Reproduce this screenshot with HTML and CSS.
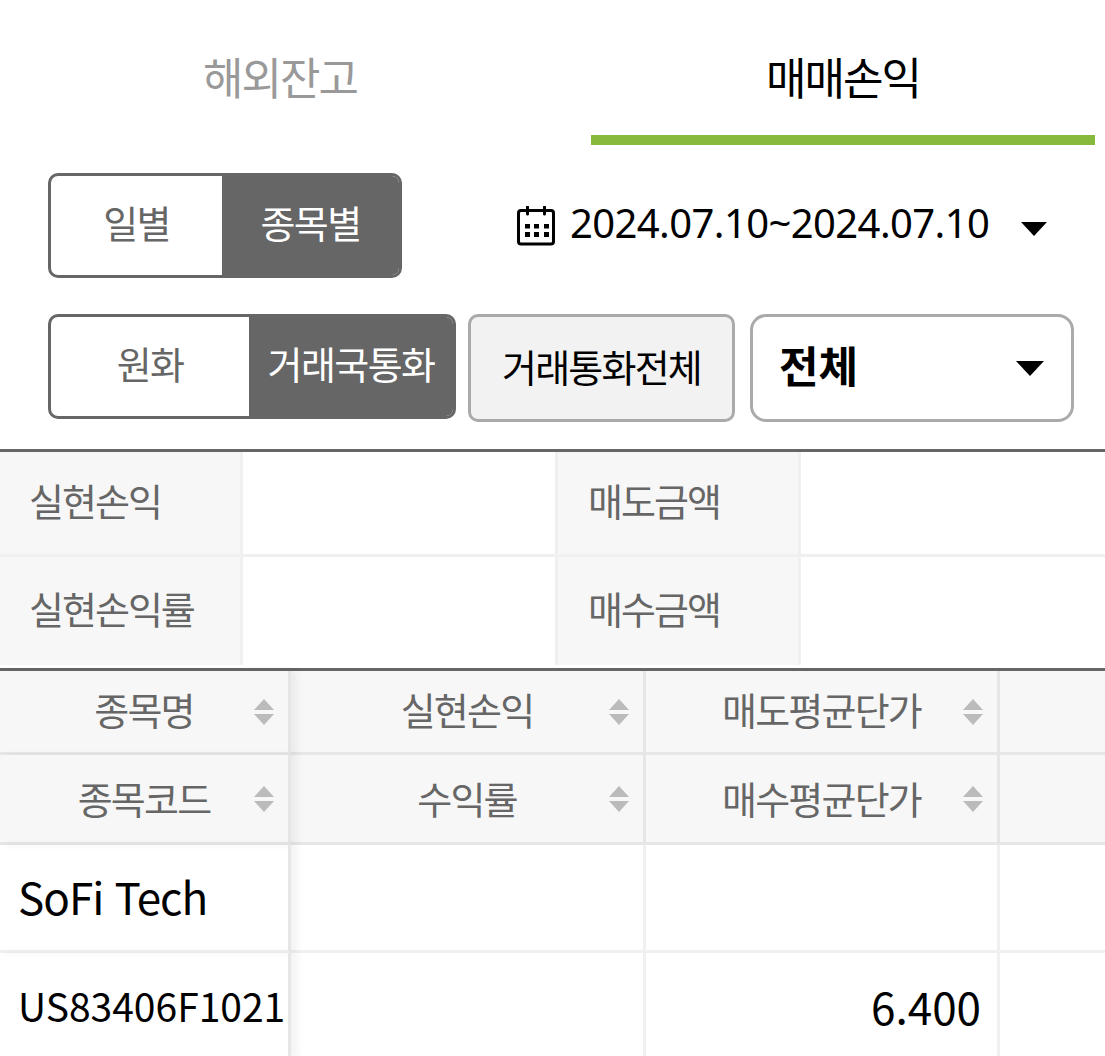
FILE: index.html
```html
<!DOCTYPE html>
<html lang="ko">
<head>
    <meta charset="UTF-8">
    <meta name="viewport" content="width=device-width, initial-scale=1.0">
    <title>매매손익</title>
    <link rel="stylesheet" href="styles.css">
</head>
<body>
    <div class="tabs">
        <div class="tab">해외잔고</div>
        <div class="tab active">매매손익</div>
    </div>

    <div class="filter-row first">
        <div class="toggle toggle-day">
            <div class="toggle-item">일별</div>
            <div class="toggle-item on">종목별</div>
        </div>
        <div class="date-picker">
            <svg class="cal-icon" width="38" height="40" viewBox="0 0 38 40">
                <rect x="1.5" y="4.5" width="35" height="33.5" rx="2.5" fill="none" stroke="#000" stroke-width="3"/>
                <path d="M10.500 1v7M27.500 1v7" stroke="#000" stroke-width="3" stroke-linecap="round"/>
                <path d="M8 18h5v4.500H8zM17 18h5v4.500h-5zM27 18h5v4.500h-5zM8 26h5v5H8zM17 26h5v5h-5zM27 26h5v5h-5z" fill="#000"/>
            </svg>
            <span class="date-text">2024.07.10~2024.07.10</span>
            <span class="caret"></span>
        </div>
    </div>

    <div class="filter-row second">
        <div class="toggle toggle-cur">
            <div class="toggle-item">원화</div>
            <div class="toggle-item on">거래국통화</div>
        </div>
        <div class="cur-btn">거래통화전체</div>
        <div class="cur-select">
            <span class="cur-value">전체</span>
            <span class="caret"></span>
        </div>
    </div>

    <div class="summary">
        <div class="sum-label">실현손익</div>
        <div class="sum-value"></div>
        <div class="sum-label mid">매도금액</div>
        <div class="sum-value"></div>
        <div class="sum-label low">실현손익률</div>
        <div class="sum-value low"></div>
        <div class="sum-label mid low">매수금액</div>
        <div class="sum-value low"></div>
    </div>

    <div class="grid">
        <div class="cell head fixed">종목명<span class="sort"></span></div>
        <div class="cell head">실현손익<span class="sort"></span></div>
        <div class="cell head">매도평균단가<span class="sort"></span></div>
        <div class="cell head last"></div>

        <div class="cell head second-head fixed">종목코드<span class="sort"></span></div>
        <div class="cell head second-head">수익률<span class="sort"></span></div>
        <div class="cell head second-head">매수평균단가<span class="sort"></span></div>
        <div class="cell head second-head last"></div>

        <div class="cell body name fixed">SoFi Tech</div>
        <div class="cell body"></div>
        <div class="cell body"></div>
        <div class="cell body last"></div>

        <div class="cell body code fixed">US83406F1021</div>
        <div class="cell body"></div>
        <div class="cell body num">6.400</div>
        <div class="cell body last"></div>
    </div>
</body>
</html>
```

FILE: styles.css
```css
* {
    box-sizing: border-box;
}
html, body {
    height: 100%;
}
body {
    margin: 0;
    overflow: hidden;
    background-color: #fff;
    font-family: "Noto Sans CJK KR", "Noto Sans", sans-serif;
    color: #000;
}

/* tabs */
.tabs {
    display: flex;
    height: 145px;
    padding-right: 10px;
}
.tab {
    width: 560px;
    padding-top: 46px;
    font-size: 44px;
    line-height: 60px;
    letter-spacing: -2px;
    text-align: center;
    color: #999;
}
.tab.active {
    flex: 1;
    margin-left: 31px;
    color: #000;
    border-bottom: 10px solid #86b93c;
}

/* filter rows */
.filter-row {
    display: flex;
    padding-left: 48px;
}
.filter-row.first {
    height: 169px;
    padding-top: 28px;
}
.filter-row.second {
    height: 135px;
}
.toggle {
    display: flex;
    height: 105px;
    border: 3px solid #666;
    border-radius: 10px;
    overflow: hidden;
    font-size: 38px;
    letter-spacing: -1.6px;
}
.toggle-day {
    width: 354px;
}
.toggle-cur {
    width: 408px;
}
.toggle-item {
    flex: 1;
    display: flex;
    align-items: center;
    justify-content: center;
    padding-bottom: 8px;
    color: #666;
}
.toggle-item.on {
    background-color: #666;
    color: #fff;
}
.toggle-day .toggle-item:first-child {
    flex: 0 0 171px;
}
.toggle-cur .toggle-item:first-child {
    flex: 0 0 198px;
}

.date-picker {
    display: flex;
    align-items: center;
    height: 105px;
    margin-left: 115px;
}
.cal-icon {
    margin-right: 15px;
}
.date-text {
    padding-bottom: 6px;
    font-family: "Noto Sans", sans-serif;
    font-size: 40px;
    letter-spacing: -0.6px;
}
.caret {
    width: 0;
    height: 0;
    border-left: 13px solid transparent;
    border-right: 13px solid transparent;
    border-top: 14px solid #000;
}
.date-picker .caret {
    margin-left: 32px;
    margin-top: 6px;
}

.cur-btn {
    display: flex;
    align-items: center;
    justify-content: center;
    width: 267px;
    height: 108px;
    margin-left: 12px;
    padding-bottom: 6px;
    border: 3px solid #aaa;
    border-radius: 10px;
    background-color: #f2f2f2;
    font-size: 38px;
    letter-spacing: -1.8px;
}
.cur-select {
    display: flex;
    align-items: center;
    justify-content: space-between;
    width: 324px;
    height: 108px;
    margin-left: 15px;
    padding: 0 27px 0 26px;
    border: 3px solid #aaa;
    border-radius: 16px;
}
.cur-value {
    padding-bottom: 8px;
    font-size: 43px;
    font-weight: 700;
}
.cur-select .caret {
    border-left-width: 14px;
    border-right-width: 14px;
    border-top-width: 15px;
}

/* summary table */
.summary {
    display: grid;
    grid-template-columns: 243px 312px 246px 1fr;
    grid-template-rows: 105px 108px;
    margin-bottom: 3px;
    border-top: 3px solid #666;
}
.sum-label {
    display: flex;
    align-items: center;
    padding-left: 29px;
    padding-bottom: 8px;
    background-color: #f7f7f7;
    border-right: 3px solid #f0f0f0;
    border-bottom: 3px solid #f0f0f0;
    font-size: 38px;
    letter-spacing: -2px;
    color: #666;
}
.sum-label.mid {
    padding-left: 30px;
    border-left: 3px solid #f0f0f0;
}
.sum-value {
    border-bottom: 3px solid #f0f0f0;
}
.sum-label.low, .sum-value.low {
    border-bottom: none;
}

/* stock grid */
.grid {
    display: grid;
    grid-template-columns: 291px 355px 354px 1fr;
    grid-template-rows: 84px 90px 108px 106px;
    border-top: 3px solid #666;
}
.cell {
    position: relative;
    border-right: 3px solid #e6e6e6;
    border-bottom: 3px solid #e6e6e6;
}
.cell.last {
    border-right: none;
}
.head {
    display: flex;
    align-items: center;
    justify-content: center;
    padding-bottom: 6px;
    background-color: #f7f7f7;
    font-size: 38px;
    letter-spacing: -1.8px;
    color: #666;
}
.head.second-head {
    padding-bottom: 2px;
}
.sort {
    position: absolute;
    right: 14px;
    top: 50%;
    width: 20px;
    height: 26px;
    margin-top: -13px;
}
.sort::before, .sort::after {
    content: "";
    position: absolute;
    left: 0;
    border-left: 10px solid transparent;
    border-right: 10px solid transparent;
}
.sort::before {
    top: 0;
    border-bottom: 11px solid #bbb;
}
.sort::after {
    bottom: 0;
    border-top: 11px solid #bbb;
}
.body {
    display: flex;
    align-items: center;
    border-color: #f0f0f0;
}
.fixed {
    z-index: 1;
    border-right-color: #e6e6e6;
    box-shadow: 6px 0 8px rgba(0, 0, 0, 0.05);
}
.name {
    padding-left: 18px;
    padding-bottom: 4px;
    font-size: 44px;
    letter-spacing: -1px;
}
.code {
    padding-left: 18px;
    font-size: 39px;
    white-space: nowrap;
}
.num {
    justify-content: flex-end;
    padding-right: 16px;
    padding-top: 2px;
    font-size: 44px;
}
```
